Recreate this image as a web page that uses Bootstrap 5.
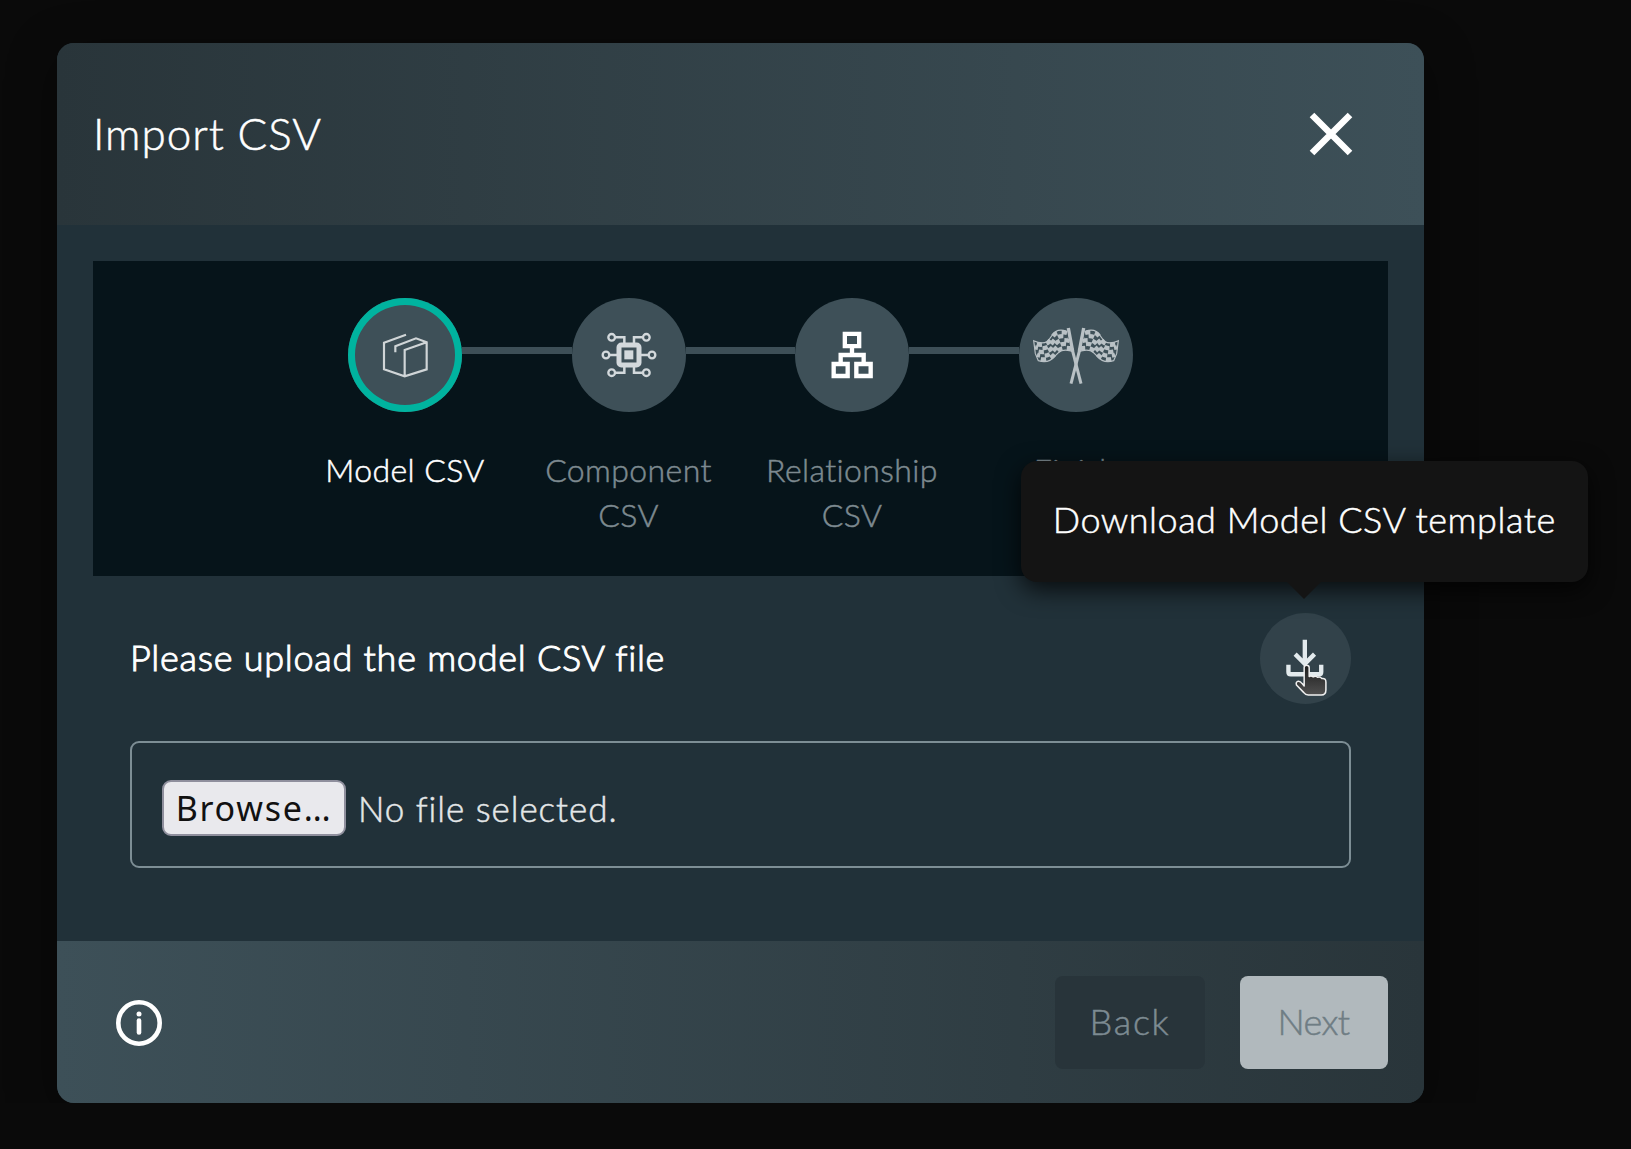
<!DOCTYPE html>
<html lang="en">
<head>
<meta charset="utf-8">
<meta name="viewport" content="width=device-width, initial-scale=1">
<title>Import CSV</title>
<link href="https://cdn.jsdelivr.net/npm/bootstrap@5.3.0/dist/css/bootstrap.min.css" rel="stylesheet">
<style>
body{background:#0a0a0a;color:#fff;font-family:Lato,"Open Sans",sans-serif;font-weight:300;-webkit-text-stroke:.5px currentColor;overflow:hidden}
.import-dialog{width:1367.5px;height:1060.5px;margin:42.5px 0 0 56.5px;border-radius:17px;background:#213139;box-shadow:0 12px 50px rgba(0,0,0,.4)}
.dialog-head{height:182px;padding:0 67px 0 36.5px;border-radius:17px 17px 0 0;background:linear-gradient(90deg,#29353a,#3d5058)}
.dialog-title{font-size:44px;line-height:60px;letter-spacing:.95px;margin-top:-2px}
.dialog-main{height:716.5px;padding:36.5px 36.5px 0 36.5px}
.dialog-foot{height:162px;padding:1px 36.5px 0 59.5px;border-radius:0 0 17px 17px;background:linear-gradient(90deg,#3d5058,#29353a)}
.stepper{height:314.5px;padding-top:37px;background:#06141a}
.step{width:223.5px}
.step-line{height:7px;margin-bottom:9px;background:#3d4f57}
.step:first-child .step-line:first-child,.step:last-child .step-line:last-child{background:none}
.step-dot{width:114px;height:114px;background:#3e5058}
.step-dot.current{box-shadow:inset 0 0 0 7px #00b39f}
.step-dot svg,.download svg{display:block;width:100%;height:100%}
.step-label{width:190px;margin-top:35px;font-size:32px;line-height:45px;letter-spacing:.4px;color:#7d8a90}
.step-label.current{color:#fff}
.upload{padding:37px 37px 0 37px}
.upload-text{margin-top:-3px;font-size:36px;line-height:48px;letter-spacing:.73px;-webkit-text-stroke:1px currentColor}
.download{width:91px;height:91px;background:#32424a}
.tip{left:-239px;top:-152px;width:567.5px;height:121px;padding-bottom:4px;border-radius:16px;background:#141414;font-size:36px;letter-spacing:.5px;white-space:nowrap;box-shadow:0 8px 24px rgba(0,0,0,.75)}
.tip::after{content:"";position:absolute;left:265.5px;top:120.5px;border:18px solid transparent;border-top-color:#141414;border-bottom:0}
.file-box{height:127.5px;margin-top:37px;padding:8px 0 0 30px;border:2px solid #7d8e95;border-radius:9px;font-size:35px}
.browse{width:184px;height:56px;border:2px solid #8f8f9d;border-radius:9px;background:#e9e9ed;color:#111;font:400 34px/50px "Noto Sans",sans-serif;letter-spacing:1.75px;-webkit-text-stroke:0}
.chosen{margin-left:12px;letter-spacing:.95px;color:#e4e7e8}
.act{height:92.5px;padding-bottom:3px;border-radius:8px;font-size:36px}
.act-back{width:150px;margin-right:34.5px;background:#28343a;color:#7d8b92;letter-spacing:1.7px}
.act-next{width:148px;background:#b1b9bd;color:#6f7d84;letter-spacing:-.6px}
</style>
<script src="https://cdn.jsdelivr.net/npm/bootstrap@5.3.0/dist/js/bootstrap.bundle.min.js"></script>
</head>
<body>
<div class="import-dialog">
  <header class="dialog-head d-flex align-items-center justify-content-between">
    <div class="dialog-title">Import CSV</div>
    <svg width="52" height="52" viewBox="0 0 52 52" aria-label="Close"><path d="M7 7L45 45M45 7L7 45" stroke="#fff" stroke-width="6.500" fill="none"/></svg>
  </header>
  <main class="dialog-main">
    <div class="stepper d-flex justify-content-center align-items-start">
      <div class="step d-flex flex-column align-items-center">
        <div class="d-flex align-items-center w-100"><div class="step-line flex-fill"></div>
          <div class="step-dot current rounded-circle"><svg viewBox="24 22 342 342" fill="none" stroke="#d0d5d7" stroke-width="6.500"><path d="M198 132L132 156V236L194 257L260 236V155L228 143L166 167V185M260 155L194 178V257"/></svg></div>
          <div class="step-line flex-fill"></div></div>
        <div class="step-label current text-center"><span>Model CSV</span></div>
      </div>
      <div class="step d-flex flex-column align-items-center">
        <div class="d-flex align-items-center w-100"><div class="step-line flex-fill"></div>
          <div class="step-dot rounded-circle"><svg viewBox="785 53 342 342" fill="none" stroke="#d3d9dc" stroke-width="7.500"><rect x="926" y="194" width="60" height="60" rx="7" stroke-width="15"/><path d="M942 210H969V237H942Z" fill="#d3d9dc" stroke="none"/><path d="M942 190V171H916M971 190V171H996M942 258V277H916M971 258V277H996M920 224H899M992 224H1013"/><g stroke-width="7"><circle cx="904" cy="171" r="10"/><circle cx="1008" cy="171" r="10"/><circle cx="887" cy="224" r="10"/><circle cx="1025" cy="224" r="10"/><circle cx="904" cy="277" r="10"/><circle cx="1008" cy="277" r="10"/></g></svg></div>
          <div class="step-line flex-fill"></div></div>
        <div class="step-label text-center">Component CSV</div>
      </div>
      <div class="step d-flex flex-column align-items-center">
        <div class="d-flex align-items-center w-100"><div class="step-line flex-fill"></div>
          <div class="step-dot rounded-circle"><svg viewBox="136 53 342 342" fill="none" stroke="#fff" stroke-width="13"><path d="M285.500 160.500H328.500V197.500H285.500ZM252 251H294V287H252ZM320 251H363V287H320ZM307 200V224M273 248V224H342V248"/></svg></div>
          <div class="step-line flex-fill"></div></div>
        <div class="step-label text-center">Relationship CSV</div>
      </div>
      <div class="step d-flex flex-column align-items-center">
        <div class="d-flex align-items-center w-100"><div class="step-line flex-fill"></div>
          <div class="step-dot rounded-circle"><svg viewBox="806 53 342 342" fill="none" stroke="#b9c1c5">
            <defs><g id="raceflag">
              <path stroke-width="10" d="M954 143L967 212"/><path stroke-width="9" d="M965 205L992 310"/>
              <path stroke-width="3.500" d="M948 152C905 140 905 175 890 184C878 190 865 188 850 181L855 220L864 241C880 246 900 244 913 228C925 215 935 202 970 214"/>
              <g stroke-width="13" stroke-dasharray="16 14">
                <path d="M950 158C908 146 907 176 892 188C880 195 866 194 851 190"/>
                <path stroke-dashoffset="15" d="M954 170C914 159 911 185 897 197C885 206 870 205 854 201"/>
                <path d="M958 182C920 171 915 194 902 206C889 217 873 217 857 212"/>
                <path stroke-dashoffset="15" d="M962 194C926 183 919 202 906 215C893 228 876 229 860 223"/>
                <path d="M966 206C932 196 923 211 911 224C898 239 879 240 863 234"/>
              </g></g></defs>
            <use href="#raceflag"/><use href="#raceflag" transform="translate(1954 0) scale(-1 1)"/></svg></div>
          <div class="step-line flex-fill"></div></div>
        <div class="step-label text-center">Finish</div>
      </div>
    </div>
    <section class="upload">
      <div class="d-flex align-items-center justify-content-between">
        <div class="upload-text">Please upload the model CSV file</div>
        <div class="download rounded-circle position-relative">
          <svg viewBox="60 66 272 272" fill="none"><defs><linearGradient id="hand" x2="0" y2="1"><stop stop-color="#1c1c1c"/><stop offset="1" stop-color="#505050"/></linearGradient></defs>
            <path d="M194 146V216M165 189L194 218L223 189M145 221V242Q145 249 152 249H236Q243 249 243 242V221" stroke="#e3eaed" stroke-width="13"/>
            <path d="M192 229Q192 222 199 222Q207 222 207 229V256Q212 252 219 257Q226 253 232 258Q240 255 245 262Q257 260 257 272V296Q257 311 243 311H204Q196 311 191 304L169 281Q166 272 174 270Q180 269 186 277L192 284Z" fill="url(#hand)" stroke="#f0f0f0" stroke-width="4.500" stroke-linejoin="round"/></svg>
          <div class="tip position-absolute d-flex align-items-center justify-content-center"><span>Download Model CSV template</span></div>
        </div>
      </div>
      <div class="file-box d-flex align-items-center">
        <button class="browse p-0" type="button">Browse…</button><span class="chosen">No file selected.</span>
      </div>
    </section>
  </main>
  <footer class="dialog-foot d-flex align-items-center">
    <svg class="me-auto" width="46" height="46" viewBox="0 0 46 46" fill="none" stroke="#fff" aria-label="Info"><circle cx="23" cy="23" r="20.700" stroke-width="4.600"/><path d="M23 20.500V32.500" stroke-width="4.600" stroke-linecap="round"/><circle cx="23" cy="14" r="2.500" fill="#fff" stroke="none"/></svg>
    <div class="act act-back d-flex align-items-center justify-content-center"><span>Back</span></div>
    <div class="act act-next d-flex align-items-center justify-content-center"><span>Next</span></div>
  </footer>
</div>
</body>
</html>
